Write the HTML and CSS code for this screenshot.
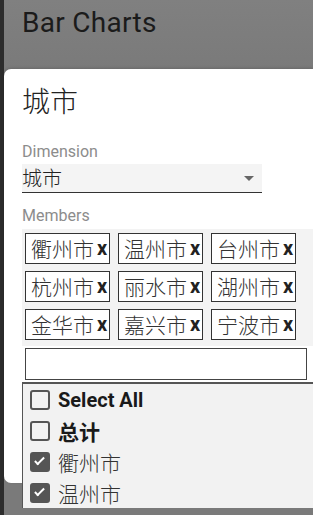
FILE: index.html
```html
<!doctype html>
<html>
<head>
	<meta http-equiv="Content-Type" content="text/html; charset=UTF-8">
	<title>Bar Charts</title>
	<link rel="stylesheet" href="styles.css">
</head>
<body>
	<div class="page">
		<div class="page__edge"></div>
		<div class="page__main">
			<header class="topbar">
				<h1>Bar Charts</h1>
			</header>
			<div class="dialog">
				<h2 class="dialog__title">城市</h2>
				<label class="field__label">Dimension</label>
				<div class="select">
					<span>城市</span>
					<i class="select__arrow"></i>
				</div>
				<label class="field__label field__label--members">Members</label>
				<div class="members">
					<span class="chip">衢州市<b>x</b></span>
					<span class="chip">温州市<b>x</b></span>
					<span class="chip">台州市<b>x</b></span>
					<span class="chip">杭州市<b>x</b></span>
					<span class="chip">丽水市<b>x</b></span>
					<span class="chip">湖州市<b>x</b></span>
					<span class="chip">金华市<b>x</b></span>
					<span class="chip">嘉兴市<b>x</b></span>
					<span class="chip">宁波市<b>x</b></span>
				</div>
				<input class="members__search" type="text">
				<ul class="options">
					<li class="option option--bold"><span class="check"></span>Select All</li>
					<li class="option option--bold option--cjk"><span class="check"></span>总计</li>
					<li class="option option--cjk"><span class="check check--on"></span>衢州市</li>
					<li class="option option--cjk"><span class="check check--on"></span>温州市</li>
				</ul>
			</div>
		</div>
	</div>
</body>
</html>
```

FILE: styles.css
```css
*,*:before,*:after{box-sizing:border-box;margin:0;padding:0}
body{background-color:#7a7a7a;font-family:Roboto,"Noto Sans CJK SC",sans-serif;color:#222;overflow:hidden}
.page{display:flex;height:515px}
.page__edge{width:4px;background-color:#2c2c2c;flex:none}
.page__main{flex:1;min-width:0}

.topbar{height:69px;background:linear-gradient(#808080,#7a7a7a);padding:5px 0 0 18px}
.topbar h1{font-size:28px;font-weight:400;line-height:36px;color:#1b1b1b;letter-spacing:0.3px}

.dialog{background-color:#fff;height:414px;border-radius:7px 0 0 7px;padding:13px 0 0 18px;box-shadow:0 -1px 3px rgba(0,0,0,0.15)}
.dialog__title{font-family:"Noto Sans CJK SC",sans-serif;font-size:28px;font-weight:300;line-height:36px;color:#222}

.field__label{display:block;font-size:16px;line-height:18px;color:#8c8c8c;margin-top:25px}
.field__label--members{margin-top:14px}

.select{display:flex;align-items:center;justify-content:space-between;width:240px;height:29px;margin-top:3px;background-color:#f4f4f4;border-bottom:1px solid #333;font-family:"Noto Sans CJK SC",sans-serif;font-size:20px;font-weight:300;line-height:28px;color:#222;padding-right:8px}
.select__arrow{width:0;height:0;border-left:5px solid transparent;border-right:5px solid transparent;border-top:5px solid #666}

.members{display:flex;flex-wrap:wrap;gap:7px 8px;width:291px;margin-top:4px;padding:4px 3px 6px;background-color:#f3f3f3}
.chip{display:inline-flex;align-items:center;width:85px;height:31px;border:1px solid #333;background-color:#fff;padding-left:5px;font-family:"Noto Sans CJK SC",sans-serif;font-size:21px;font-weight:300;line-height:29px;color:#333}
.chip b{font-family:Roboto,sans-serif;font-size:20px;font-weight:700;margin-left:3px;color:#222}

.members__search{display:block;width:282px;height:32px;margin:2px 0 0 3px;border:1px solid #444;background-color:#fff}

.options{list-style:none;margin-top:2px;width:291px;background-color:#f2f2f2;border-top:2px solid #555;border-left:1px solid #555}
.option{display:flex;align-items:center;height:31px;padding-left:7px;font-size:20px;color:#222}
.option--cjk{font-family:"Noto Sans CJK SC",sans-serif;font-size:21px;font-weight:300;color:#333}
.option--bold{font-weight:700;color:#1a1a1a}
.check{width:20px;height:20px;border:2px solid #555;border-radius:3px;margin-right:8px;flex:none;position:relative;background-color:#f2f2f2}
.check--on{background-color:#555}
.check--on:after{content:"";position:absolute;left:5px;top:1px;width:5px;height:10px;border:solid #fff;border-width:0 2px 2px 0;transform:rotate(45deg)}
```
